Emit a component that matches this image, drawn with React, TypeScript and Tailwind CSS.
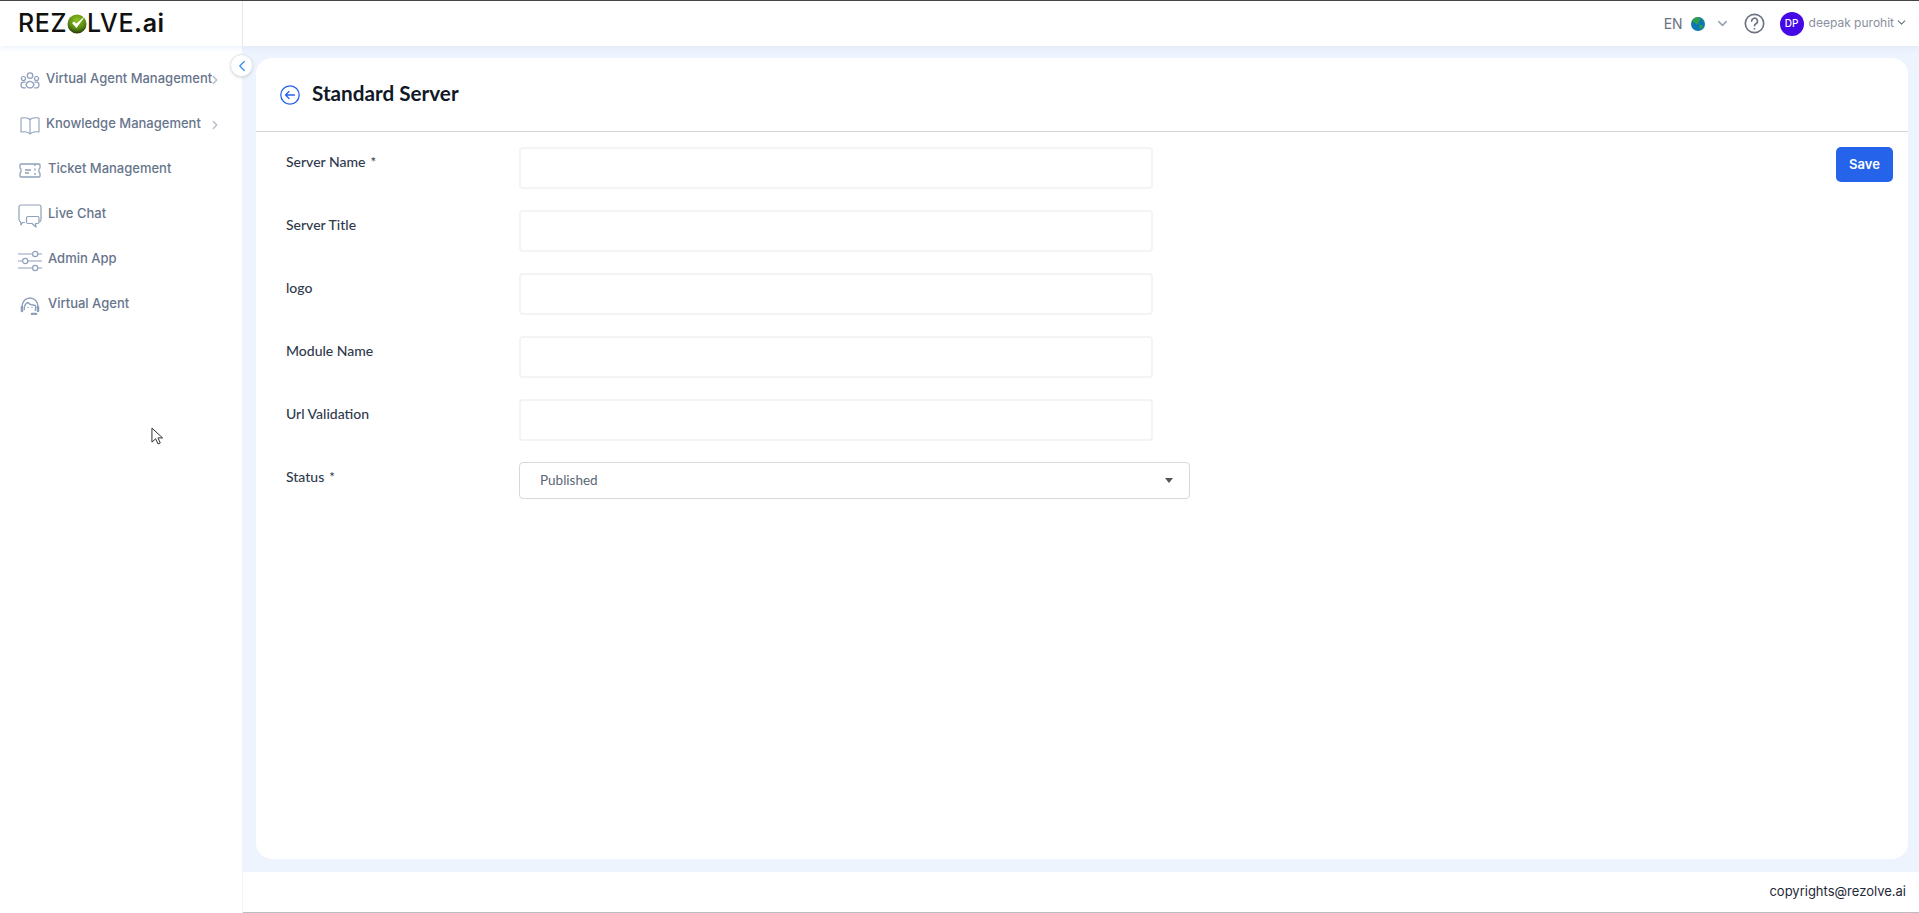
import { ReactNode } from 'react'
import { ChevronDown, ChevronLeft, ChevronRight } from 'lucide-react'

function AgentsIcon() {
  return (
    <svg viewBox="0 0 24 22" className="w-[20px] h-[18px] text-[#8fa0ba]" fill="none" stroke="currentColor" strokeWidth="1.500">
      <circle cx="12" cy="4.500" r="3.300" />
      <circle cx="4" cy="8" r="2.500" />
      <circle cx="20" cy="8" r="2.500" />
      <path d="M7 15.500c1-2.500 3-4 5-4s4 1.500 5 4c-1 2.500-3 4-5 4s-4-1.500-5-4z" />
      <path d="M6.500 12.500H4C2.500 12.500 1 14 1 16s1.500 3.500 3 3.500h3M17.500 12.500H20c1.500 0 3 1.500 3 3.500s-1.500 3.500-3 3.500h-3" />
    </svg>
  )
}

function BookIcon() {
  return (
    <svg viewBox="0 0 20 18" className="w-[20px] h-[18px] text-[#8fa0ba]" fill="none" stroke="currentColor" strokeWidth="1.100">
      <path d="M10 2.500C8.500 1 4 .5 1 1v14c3-.5 7.500 0 9 2 1.500-2 6-2.500 9-2V1c-3-.5-7.500 0-9 1.500z" strokeLinejoin="round" />
      <path d="M10 2.500V17" />
    </svg>
  )
}

function TicketIcon() {
  return (
    <svg viewBox="0 0 22 15" className="w-[22px] h-[15px] text-[#8fa0ba]" fill="none" stroke="currentColor" strokeWidth="1.300">
      <path d="M2 1h18c.6 0 1 .4 1 1v3c-1.500.5-1.500 4.500 0 5v3c0 .6-.4 1-1 1H2c-.6 0-1-.4-1-1v-3c1.500-.5 1.500-4.500 0-5V2c0-.6.4-1 1-1z" strokeLinejoin="round" />
      <path d="M6 7h6M6 10h4M16 1v2M16 5.500v2M16 10v2" />
    </svg>
  )
}

function ChatIcon() {
  return (
    <svg viewBox="0 0 24 24" className="w-[24px] h-[24px] text-[#8fa0ba]" fill="none" stroke="currentColor" strokeWidth="1.200">
      <path d="M7 18.500H4.500L3 21l-.3-3C1.500 17.500 1 16.500 1 15.500V3C1 1.800 1.800 1 3 1h18c1.200 0 2 .8 2 2v12.500c0 1-.5 2-1.500 2.500" strokeLinejoin="round" />
      <path d="M10 12.500h9.500c1 0 1.500.5 1.500 1.500v4c0 1-.5 1.500-1.500 1.500h-2l.5 3.500-4-3.500H10c-1 0-1.500-.5-1.500-1.500v-4c0-1 .5-1.500 1.500-1.500z" strokeLinejoin="round" />
    </svg>
  )
}

function SlidersIcon() {
  return (
    <svg viewBox="0 0 24 22" className="w-[24px] h-[22px] text-[#8fa0ba]" fill="none" stroke="currentColor" strokeWidth="1.200">
      <path d="M0 4h14.500M20 4h4M0 11h4.500M10 11h14M0 18h14.500M20 18h4" />
      <circle cx="17.200" cy="4" r="2.600" />
      <circle cx="7.200" cy="11" r="2.600" />
      <circle cx="17.200" cy="18" r="2.600" />
    </svg>
  )
}

function HeadsetIcon() {
  return (
    <svg viewBox="0 0 20 18" className="w-[20px] h-[18px] text-[#8fa0ba]" fill="none" stroke="currentColor" strokeWidth="1.400">
      <path d="M2 10C2 4.500 5.500 1 10 1s8 3.500 8 9" />
      <path d="M4.500 13c-.8-3.500 1-7 3.500-7.500 1 1.500 3 2.500 5 2.500l2.500.5c.5 2 .3 4-.5 5.500" />
      <path d="M2 10v4M18 10v4M12 17h4" strokeWidth="2.600" strokeLinecap="round" />
      <circle cx="8" cy="10.500" r=".7" fill="currentColor" stroke="none" />
      <circle cx="12" cy="10.500" r=".7" fill="currentColor" stroke="none" />
    </svg>
  )
}

function GlobeIcon() {
  return (
    <svg viewBox="0 0 14 14" className="w-[14px] h-[14px]">
      <circle cx="7" cy="7" r="7" fill="#0a78b5" />
      <path d="M2 2.500C4 .5 7 0 9 .500L9.500 3 7.500 4 8 6 5.500 7.500 3.500 5.500 1.500 5z" fill="#2f9e44" />
      <path d="M8.500 8h3l.5 1.500-2 3-1.500-1.500z" fill="#2f9e44" />
      <path d="M11 2.500l2 2-1.500.5z" fill="#2f9e44" />
    </svg>
  )
}

function Logo() {
  return (
    <div className="flex items-center font-['Inter',sans-serif] font-medium text-[25px] leading-none text-[#111] tracking-[0.6px]">
      <span>REZ</span>
      <svg viewBox="0 0 22 22" className="w-[22px] h-[22px] -mx-[1px] -translate-y-[1px]">
        <defs>
          <radialGradient id="logoBall" cx="50%" cy="30%" r="75%">
            <stop offset="0%" stopColor="#8fc31f" />
            <stop offset="60%" stopColor="#5a8a12" />
            <stop offset="100%" stopColor="#1b2608" />
          </radialGradient>
        </defs>
        <circle cx="11" cy="12" r="9.500" fill="url(#logoBall)" />
        <path d="M6 11l4.500 5L20 3l-9.500 8.500L8 9.500z" fill="#fff" />
      </svg>
      <span>LVE</span>
      <span className="font-semibold">.ai</span>
    </div>
  )
}

const navItems: { label: string; icon: ReactNode; labelClass: string; chevron?: boolean }[] = [
  { label: 'Virtual Agent Management', icon: <AgentsIcon />, labelClass: 'ml-[4px]', chevron: true },
  { label: 'Knowledge Management', icon: <BookIcon />, labelClass: 'ml-[4px]', chevron: true },
  { label: 'Ticket Management', icon: <TicketIcon />, labelClass: 'ml-[6px]' },
  { label: 'Live Chat', icon: <ChatIcon />, labelClass: 'ml-[6px]' },
  { label: 'Admin App', icon: <SlidersIcon />, labelClass: 'ml-[6px]' },
  { label: 'Virtual Agent', icon: <HeadsetIcon />, labelClass: 'ml-[6px]' },
]

const fields = [
  { label: 'Server Name', required: true },
  { label: 'Server Title' },
  { label: 'logo' },
  { label: 'Module Name' },
  { label: 'Url Validation' },
]

const jost = "font-['Lato',sans-serif]"

function FormRow({ label, required, children }: { label: string; required?: boolean; children: ReactNode }) {
  return (
    <div className="flex items-start">
      <label className={`w-[233px] shrink-0 pt-[5px] text-[14px] leading-[20px] font-medium text-[#2f3a4d] ${jost}`}>
        {label}
        {required && <span className="ml-[5px] text-[13px]">*</span>}
      </label>
      {children}
    </div>
  )
}

export default function App() {
  return (
    <div className="relative h-screen w-full flex flex-col overflow-hidden bg-white border-t border-[#444] font-['Inter',sans-serif]">
      <header className="h-[45px] shrink-0 flex items-center bg-white shadow-[0_2px_6px_rgba(200,215,240,0.35)] z-10">
        <div className="w-[243px] h-full shrink-0 flex items-center pl-[18px] border-r border-[#e5e7eb]">
          <Logo />
        </div>
        <div className="flex-1 flex items-center justify-end pr-[11px]">
          <span className="text-[14px] text-[#6b7280] mr-[8px]">EN</span>
          <GlobeIcon />
          <ChevronDown className="w-[15px] h-[15px] text-[#94a3b8] ml-[10px]" strokeWidth={2.5} />
          <svg viewBox="0 0 24 24" className="w-[21px] h-[21px] ml-[14px] text-[#6b7280]" fill="none" stroke="currentColor" strokeWidth="1.900">
            <circle cx="12" cy="12" r="10.500" />
            <path d="M8.800 9.200a3.300 3.300 0 1 1 4.800 3c-1 .6-1.600 1.200-1.600 2.300" strokeLinecap="round" />
            <circle cx="12" cy="18" r="1" fill="currentColor" stroke="none" />
          </svg>
          <span className="w-[24px] h-[24px] ml-[15px] rounded-full bg-[#4409e6] text-white text-[10px] font-medium flex items-center justify-center">DP</span>
          <span className="ml-[5px] text-[12px] text-[#8a8f9c] -translate-y-[1px]">deepak purohit</span>
          <ChevronDown className="w-[13px] h-[13px] text-[#6b7280] ml-[1px] -translate-y-[1px]" strokeWidth={2} />
        </div>
      </header>

      <div className="flex-1 min-h-0 flex">
        <aside className="w-[243px] shrink-0 bg-white border-r border-[#f0f3f8] pt-[10px] pl-[18px]">
          <nav className="flex flex-col w-[204px]">
            {navItems.map((item) => (
              <div key={item.label} className="h-[45px] flex items-center">
                <span className="w-[24px] shrink-0 flex justify-center translate-y-[2px]">{item.icon}</span>
                <span className={`flex-1 min-w-0 whitespace-nowrap text-[13px] font-medium text-[#67758c] ${item.labelClass}`}>{item.label}</span>
                {item.chevron && <ChevronRight className="w-[14px] h-[14px] shrink-0 text-[#b8bec8] translate-y-[1px]" strokeWidth={2.5} />}
              </div>
            ))}
          </nav>
        </aside>

        <div className="flex-1 min-w-0 flex flex-col bg-[#eef4fd]">
          <main className="flex-1 min-h-0 pt-[12px] pl-[13px] pr-[11px] pb-[13px]">
            <div className="h-full bg-white rounded-[16px] flex flex-col">
              <div className="h-[74px] shrink-0 flex items-center pl-[24px] border-b border-[#d4d4d8]">
                <svg viewBox="0 0 20 20" className="w-[20px] h-[20px] text-[#2563eb]" fill="none" stroke="currentColor" strokeWidth="1.300">
                  <circle cx="10" cy="10" r="9.200" />
                  <path d="M14.500 10h-9M9 6.500 5.500 10 9 13.500" strokeLinecap="round" strokeLinejoin="round" />
                </svg>
                <h1 className={`ml-[12px] -translate-y-[1px] text-[20.700px] font-bold text-[#111827] ${jost}`}>Standard Server</h1>
              </div>
              <div className="flex items-start pt-[15px] pl-[30px] pr-[15px]">
                <form className="flex-1 flex flex-col gap-[21px]">
                  {fields.map((f) => (
                    <FormRow key={f.label} label={f.label} required={f.required}>
                      <input className="w-[634px] h-[42px] rounded-[4px] border-2 border-[#f3f4f6] bg-white outline-none" />
                    </FormRow>
                  ))}
                  <FormRow label="Status" required>
                    <div className={`w-[671px] h-[37px] rounded-[4px] border border-[#d9d9d9] flex items-center justify-between pl-[20px] pr-[16px] text-[13.500px] text-[#5b6675] ${jost}`}>
                      <span>Published</span>
                      <span className="w-0 h-0 border-l-[4px] border-r-[4px] border-t-[5px] border-l-transparent border-r-transparent border-t-[#555]" />
                    </div>
                  </FormRow>
                </form>
                <button className="w-[57px] h-[35px] rounded-[5px] bg-[#2563eb] text-white text-[13px] font-semibold">Save</button>
              </div>
            </div>
          </main>
          <footer className="h-[41px] shrink-0 bg-white flex items-center justify-end pr-[13px] border-b border-[#bdbdbd] text-[13px] text-[#1f2937]">
            copyrights@rezolve.ai
          </footer>
        </div>
      </div>

      <button className="absolute left-[230px] top-[53px] z-20 w-[23px] h-[23px] rounded-full bg-white border border-[#dfe5ee] shadow-sm flex items-center justify-center">
        <ChevronLeft className="w-[18px] h-[18px] text-[#2f8af5]" strokeWidth={1.6} />
      </button>

      <svg viewBox="0 0 14 20" className="absolute left-[151px] top-[426px] w-[13px] h-[19px] z-30">
        <path d="M1 1v15l4-3.500 2.500 5.500 2.500-1-2.500-5.500H12.500z" fill="#fff" stroke="#222" strokeWidth="1" strokeLinejoin="round" />
      </svg>
    </div>
  )
}
